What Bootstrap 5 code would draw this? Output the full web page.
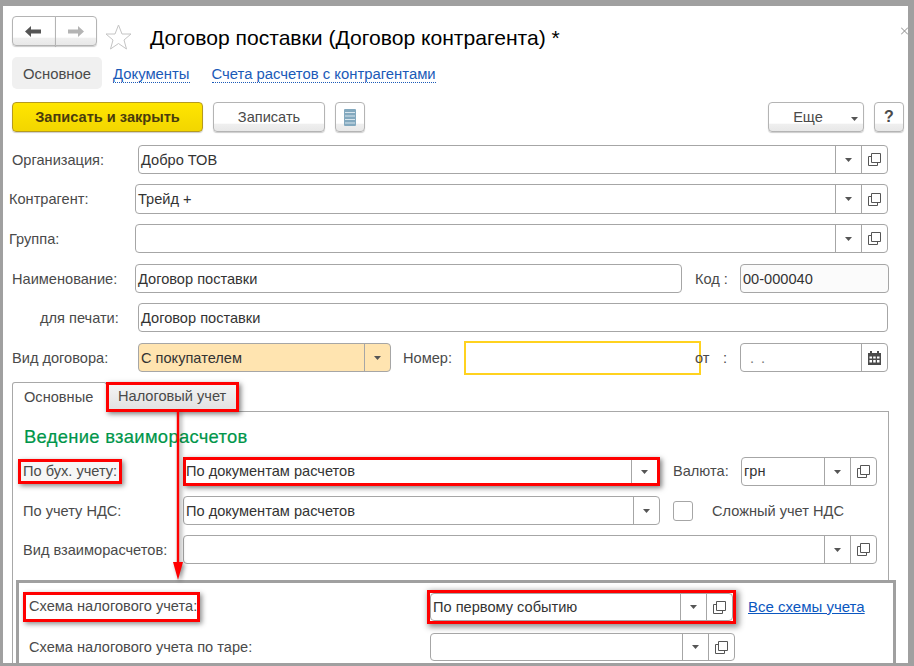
<!DOCTYPE html>
<html lang="ru">
<head>
<meta charset="utf-8">
<title>Договор поставки</title>
<link href="https://cdn.jsdelivr.net/npm/bootstrap@5.3.0/dist/css/bootstrap.min.css" rel="stylesheet">
<style>
html,body{margin:0;background:#fff;}
body{font-family:"Liberation Sans",Arial,sans-serif;font-size:14.6px;color:#4a4a4a;line-height:1.2;}
.frame{width:914px;height:666px;box-sizing:border-box;border-style:solid;border-color:#a0a0a0;border-width:6px 6px 3px 3px;overflow:hidden;position:relative;background:#fff;}
.head-row{margin:10px 0 0 9px;height:30px;}
.nav-grp{width:85px;height:30px;}
.ui-btn{--bs-btn-padding-x:0;--bs-btn-padding-y:0;--bs-btn-font-size:14.6px;--bs-btn-color:#4a4a4a;--bs-btn-hover-color:#4a4a4a;--bs-btn-border-color:#b4b4b4;--bs-btn-hover-border-color:#b4b4b4;--bs-btn-border-radius:4px;height:30px;display:flex;align-items:center;justify-content:center;background:linear-gradient(#fff 0,#fff 72%,#efefef 76%,#e8e8e8 100%);box-shadow:0 1px 1px rgba(0,0,0,.2);}
.ui-btn:hover{background:linear-gradient(#fff 0,#fff 72%,#efefef 76%,#e8e8e8 100%);}
.nav-back{width:43px;}
.nav-fwd{width:42px;}
.star-ico{margin:8px 0 0 8px;flex:none;}
.title-txt{margin:8px 0 0 18px;font-size:21.1px;line-height:28px;color:#000;white-space:nowrap;}
.close-ico{margin:11px 0 0 auto;flex:none;}
.sub-tabs{margin:11px 0 0 9px;height:32px;font-size:14.85px;}
.sub-active{width:90px;height:32px;padding-top:3px;background:#f0f0f0;border-radius:5px;display:flex;align-items:center;justify-content:center;color:#4a4a4a;text-decoration:none;}
.sub-active:hover{color:#4a4a4a;}
.sub-link{color:#1a5ab8;text-decoration:none;border-bottom:1px dotted #1a5ab8;line-height:15px;margin-top:3px;margin-left:11px;}
.sub-link2{margin-left:22px;}
.tool-row{margin:13px 0 0 9px;width:892px;}
.btn-save{--bs-btn-color:#4a3c0c;--bs-btn-hover-color:#4a3c0c;--bs-btn-border-color:#b59a20;--bs-btn-hover-border-color:#b59a20;width:191px;font-weight:700;padding-top:2px;background:linear-gradient(#ffe600,#f2d600);}
.btn-save:hover{background:linear-gradient(#ffe600,#f2d600);}
.btn-write{width:112px;margin-left:10px;padding-top:2px;}
.btn-doc{width:30px;margin-left:10px;}
.btn-more{width:96px;margin-left:auto;position:relative;padding-right:16px;padding-top:2px;}
.btn-more svg{position:absolute;right:5px;top:14px;}
.btn-help{width:30px;margin-left:10px;font-weight:700;font-size:16px;}
.frm-wrap{margin-top:13px;}
.frow{height:29px;margin:0 20px 11px 9px;}
.frow-first{margin-bottom:10px;}
.frow-tall{height:30px;margin-bottom:10px;}
.frow-in{margin-left:6px;}
.frow-edge{margin-right:19px;}
.frow-tab{margin-bottom:10px;}
.lbl{flex:none;white-space:nowrap;padding-top:2px;}
.lw-126{width:126px;}
.lw-name{width:123px;}
.lw-print{width:126px;padding-left:28px;}
.fld{display:flex;height:100%;min-width:0;border:1px solid #a6a6a6;border-radius:4px;background:#fff;color:#333;}
.fld-val{flex:1 1 auto;padding-left:2px;padding-top:2px;display:flex;align-items:center;white-space:nowrap;min-width:0;}
.fld-ico{flex:none;width:26px;border-left:1px solid #a6a6a6;display:flex;align-items:center;justify-content:center;}
.w-name{width:547px;flex:none;}
.lbl-code{margin-left:13px;width:45px;}
.w-code{width:149px;flex:none;background:#fbfbfb;}
.w-kind{width:253px;flex:none;background:#ffe4b0;}
.lbl-num{margin-left:12px;width:61px;}
.num-box{width:237px;height:34px;flex:none;border:2px solid #ffd21f;}
.lbl-from{margin-left:-6px;width:28px;}
.lbl-colon{width:17px;}
.w-date{width:148px;flex:none;}
.dots{color:#777;padding-left:9px;word-spacing:3px;}
.tab-strip{margin:0 0 -1px 9px;height:30px;border:0;position:relative;z-index:1;flex-wrap:nowrap;}
.tab-on{width:95px;height:30px;border:1px solid #a8a8a8;border-bottom:0;border-radius:3px 3px 0 0;background:#fff;color:#4a4a4a;display:flex;align-items:center;padding:0 0 0 11px;}
.tab-mark{width:133px;height:30px;margin-left:-1px;border:3px solid #f00;background:linear-gradient(#f4f4f4,#e2e2e2);color:#4a4a4a;display:flex;align-items:center;padding:0 0 0 9px;border-radius:0;box-shadow:2px 2px 5px rgba(0,0,0,.5);}
.tab-strip .tab-on:hover,.tab-strip .tab-mark:hover{color:#4a4a4a;}
.pane{margin-left:9px;width:877px;height:300px;border:1px solid #a8a8a8;}
.sec-head{margin:13px 0 8px 11px;font-size:18.4px;line-height:24px;font-weight:400;color:#00964a;letter-spacing:.3px;-webkit-text-stroke:.2px #00964a;}
.prow{height:29px;margin:0 0 10px 10px;}
.prow-first .lbl,.prow-first .fld-val{padding-top:0;}
.plw{width:160px;}
.mark-lbl{display:inline-block;outline:3px solid #f00;outline-offset:0;padding:1px 2px 1px 2px;margin-left:-2px;box-shadow:2px 2px 5px 3px rgba(0,0,0,.45);background:#f6f6f6;}
.w-wide{width:477px;flex:none;}
.red-fld{border:3px solid #f00;border-radius:0;box-shadow:2px 2px 5px rgba(0,0,0,.5);}
.red-fld .fld-val{padding-left:0;}
.lbl-cur{margin-left:13px;width:68px;}
.w-cur{width:136px;flex:none;}
.chk-box{margin-left:13px;width:20px;height:20px;flex:none;border:1px solid #a6a6a6;border-radius:3px;}
.lbl-chk{margin-left:19px;}
.w-mut{width:694px;flex:none;}
.scheme{margin:16px -8px 0 3px;height:90px;border:3px solid #a0a0a0;background:#fff;position:relative;}
.srow{height:28px;margin:0 0 12px 10px;}
.srow-first{margin-top:10px;}
.slw{width:401px;}
.mark-lbl2{display:inline-block;outline:3px solid #f00;padding:3px 0 3px 3px;margin-left:-3px;margin-top:-2px;box-shadow:2px 2px 5px 3px rgba(0,0,0,.45);}
.red-wrap{flex:none;width:309px;height:34px;margin:-3px 0 -3px -3px;border:3px solid #f00;box-shadow:2px 2px 6px 1px rgba(0,0,0,.45);}
.w-s2{width:305px;flex:none;}
.all-link{margin-left:12px;color:#0b57c0;text-decoration:underline;white-space:nowrap;font-size:15px;}
.arrow-over{position:absolute;left:167px;top:404px;z-index:3;filter:drop-shadow(2px 2px 2px rgba(0,0,0,.45));}
</style>
</head>
<body>
<svg width="0" height="0" class="d-none" aria-hidden="true">
<symbol id="i-tri" viewBox="0 0 7 4"><path d="M0 0H7L3.500 4Z" fill="#555"/></symbol>
<symbol id="i-copy" viewBox="0 0 13 13"><path d="M3.500 .5H12.500V9.500H3.500Z" fill="#fff" stroke="#555"/><path d="M3.500 3.500H.5V12.500H9.500V9.500" fill="none" stroke="#555"/></symbol>
</svg>
<div class="frame">
  <div class="head-row d-flex">
    <div class="btn-group nav-grp flex-none">
      <button class="btn ui-btn nav-back"><svg width="17" height="11" viewBox="0 0 17 11"><path d="M0 5.500 6 0V3.500H16V7.500H6V11Z" fill="#555"/></svg></button>
      <button class="btn ui-btn nav-fwd"><svg width="17" height="11" viewBox="0 0 17 11"><path d="M17 5.500 11 0V3.500H1V7.500H11V11Z" fill="#b4b4b4"/></svg></button>
    </div>
    <svg class="star-ico" width="27" height="26" viewBox="0 0 27 26"><path d="M13.5 1 17 10H26L19 16 21.5 25 13.5 19.5 5.5 25 8 16 1 10H10Z" fill="#fff" stroke="#c4c4c4"/></svg>
    <div class="title-txt">Договор поставки (Договор контрагента) *</div>
    <svg class="close-ico" width="7" height="8" viewBox="0 0 7 8"><path d="M0 .5 7 7.5M7 .5 0 7.5" stroke="#8a8a8a"/></svg>
  </div>
  <nav class="sub-tabs d-flex align-items-center">
    <a class="sub-active" href="#" onclick="return false">Основное</a>
    <a class="sub-link" href="#" onclick="return false">Документы</a>
    <a class="sub-link sub-link2" href="#" onclick="return false">Счета расчетов с контрагентами</a>
  </nav>
  <div class="tool-row d-flex">
    <button class="btn ui-btn btn-save">Записать и закрыть</button>
    <button class="btn ui-btn btn-write">Записать</button>
    <button class="btn ui-btn btn-doc"><svg width="12" height="17" viewBox="0 0 12 17"><rect width="12" height="17" rx="1" fill="#83a9bf"/><path d="M1 3.500H11M1 7H11M1 10.500H11M1 14H11" stroke="#d8e6ee" stroke-width="1"/></svg></button>
    <button class="btn ui-btn btn-more">Еще<svg width="7" height="4"><use href="#i-tri"/></svg></button>
    <button class="btn ui-btn btn-help">?</button>
  </div>
  <div class="frm-wrap">
    <div class="frow frow-first d-flex align-items-center">
      <span class="lbl lw-126">Организация:</span>
      <div class="fld flex-grow-1"><span class="fld-val">Добро ТОВ</span><span class="fld-ico"><svg width="7" height="4"><use href="#i-tri"/></svg></span><span class="fld-ico"><svg width="13" height="13"><use href="#i-copy"/></svg></span></div>
    </div>
    <div class="frow d-flex align-items-center frow-tall frow-in">
      <span class="lbl lw-126">Контрагент:</span>
      <div class="fld flex-grow-1"><span class="fld-val">Трейд +</span><span class="fld-ico"><svg width="7" height="4"><use href="#i-tri"/></svg></span><span class="fld-ico"><svg width="13" height="13"><use href="#i-copy"/></svg></span></div>
    </div>
    <div class="frow d-flex align-items-center frow-in">
      <span class="lbl lw-126">Группа:</span>
      <div class="fld flex-grow-1"><span class="fld-val"></span><span class="fld-ico"><svg width="7" height="4"><use href="#i-tri"/></svg></span><span class="fld-ico"><svg width="13" height="13"><use href="#i-copy"/></svg></span></div>
    </div>
    <div class="frow d-flex align-items-center frow-tab frow-edge">
      <span class="lbl lw-name">Наименование:</span>
      <div class="fld w-name"><span class="fld-val">Договор поставки</span></div>
      <span class="lbl lbl-code">Код :</span>
      <div class="fld w-code"><span class="fld-val">00-000040</span></div>
    </div>
    <div class="frow d-flex align-items-center">
      <span class="lbl lw-print">для печати:</span>
      <div class="fld flex-grow-1"><span class="fld-val">Договор поставки</span></div>
    </div>
    <div class="frow d-flex align-items-center frow-tab">
      <span class="lbl lw-126">Вид договора:</span>
      <div class="fld w-kind"><span class="fld-val">С покупателем</span><span class="fld-ico"><svg width="7" height="4"><use href="#i-tri"/></svg></span></div>
      <span class="lbl lbl-num">Номер:</span>
      <div class="num-box"></div>
      <span class="lbl lbl-from">от</span>
      <span class="lbl lbl-colon">:</span>
      <div class="fld w-date"><span class="fld-val dots">. .</span><span class="fld-ico"><svg width="13" height="14" viewBox="0 0 13 14"><path d="M0 2H13V14H0Z" fill="#4a4a4a"/><path d="M3 0V3M10 0V3" stroke="#4a4a4a" stroke-width="2"/><path d="M1.500 5.500h2.500v2h-2.500zM5.200 5.500h2.500v2h-2.500zM9 5.500h2.500v2H9zM1.500 9h2.500v2.500h-2.500zM5.200 9h2.500v2.500h-2.500zM9 9h2.500v2.500H9z" fill="#fff"/></svg></span></div>
    </div>
  </div>
  <ul class="nav tab-strip">
    <li class="nav-item"><a class="nav-link tab-on" href="#" onclick="return false">Основные</a></li>
    <li class="nav-item"><a class="nav-link tab-mark" href="#" onclick="return false">Налоговый учет</a></li>
  </ul>
  <div class="pane">
    <h2 class="sec-head">Ведение взаиморасчетов</h2>
    <div class="prow prow-first d-flex align-items-center">
      <span class="lbl plw"><span class="mark-lbl">По бух. учету:</span></span>
      <div class="fld w-wide red-fld"><span class="fld-val">По документам расчетов</span><span class="fld-ico"><svg width="7" height="4"><use href="#i-tri"/></svg></span></div>
      <span class="lbl lbl-cur">Валюта:</span>
      <div class="fld w-cur"><span class="fld-val">грн</span><span class="fld-ico"><svg width="7" height="4"><use href="#i-tri"/></svg></span><span class="fld-ico"><svg width="13" height="13"><use href="#i-copy"/></svg></span></div>
    </div>
    <div class="prow d-flex align-items-center">
      <span class="lbl plw">По учету НДС:</span>
      <div class="fld w-wide"><span class="fld-val">По документам расчетов</span><span class="fld-ico"><svg width="7" height="4"><use href="#i-tri"/></svg></span></div>
      <span class="chk-box"></span>
      <span class="lbl lbl-chk">Сложный учет НДС</span>
    </div>
    <div class="prow d-flex align-items-center">
      <span class="lbl plw">Вид взаиморасчетов:</span>
      <div class="fld w-mut"><span class="fld-val"></span><span class="fld-ico"><svg width="7" height="4"><use href="#i-tri"/></svg></span><span class="fld-ico"><svg width="13" height="13"><use href="#i-copy"/></svg></span></div>
    </div>
    <div class="scheme">
      <div class="srow srow-first d-flex align-items-center">
        <span class="lbl slw"><span class="mark-lbl2">Схема налогового учета:</span></span>
        <div class="red-wrap"><div class="fld"><span class="fld-val">По первому событию</span><span class="fld-ico"><svg width="7" height="4"><use href="#i-tri"/></svg></span><span class="fld-ico"><svg width="13" height="13"><use href="#i-copy"/></svg></span></div></div>
        <a class="all-link" href="#" onclick="return false">Все схемы учета</a>
      </div>
      <div class="srow d-flex align-items-center">
        <span class="lbl slw">Схема налогового учета по таре:</span>
        <div class="fld w-s2"><span class="fld-val"></span><span class="fld-ico"><svg width="7" height="4"><use href="#i-tri"/></svg></span><span class="fld-ico"><svg width="13" height="13"><use href="#i-copy"/></svg></span></div>
      </div>
    </div>
  </div>
  <svg class="arrow-over" width="20" height="172" viewBox="0 0 20 172"><path d="M6.800 0H9.200V152H13L8 170 3 152H6.800Z" fill="#f00"/></svg>
</div>
<script src="https://cdn.jsdelivr.net/npm/bootstrap@5.3.0/dist/js/bootstrap.bundle.min.js"></script>
</body>
</html>
